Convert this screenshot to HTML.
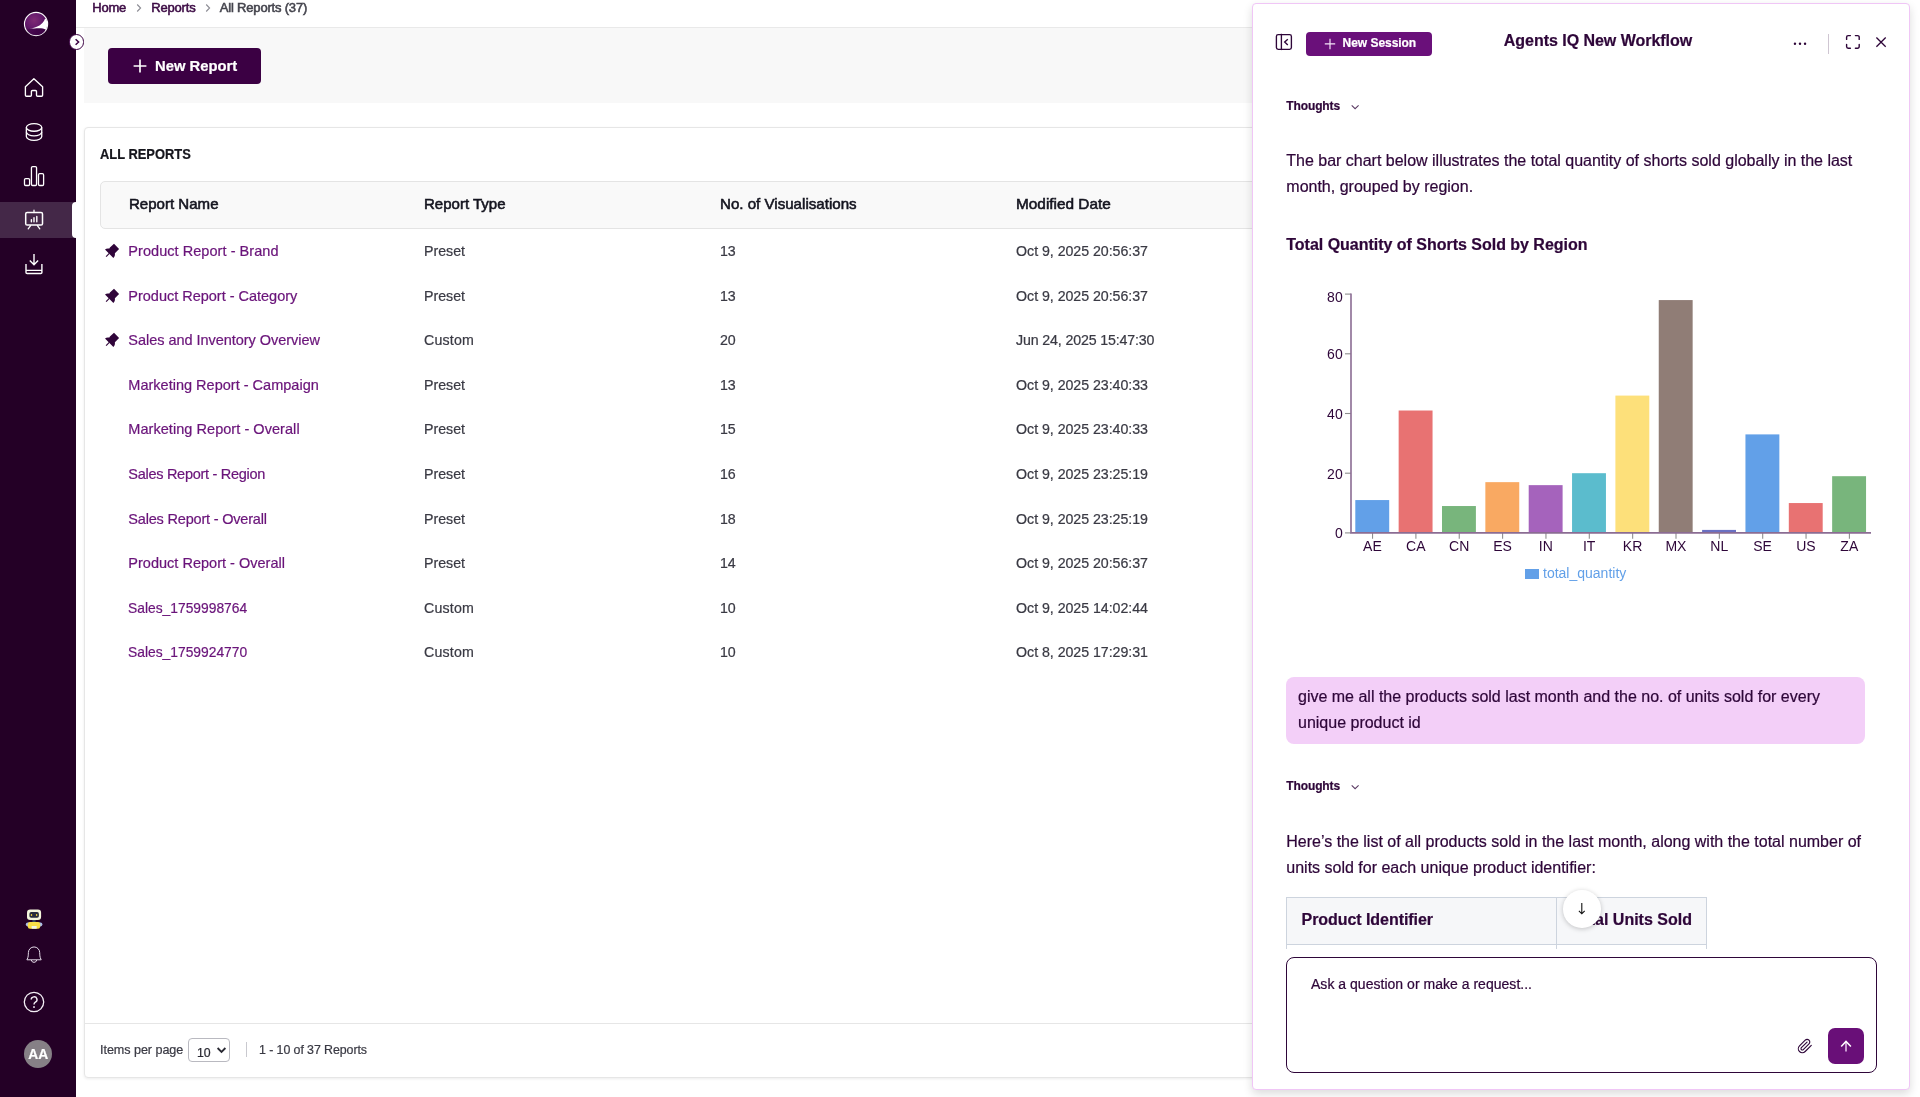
<!DOCTYPE html>
<html lang="en">
<head>
<meta charset="utf-8">
<title>All Reports</title>
<style>
*{box-sizing:border-box;margin:0;padding:0}
html,body{width:1920px;height:1097px;overflow:hidden;background:#fff}
body{position:relative;font-family:"Liberation Sans",sans-serif;color:#2a2a33}
#wrap{position:absolute;left:0;top:0;width:1920px;height:1097px;overflow:hidden;will-change:transform}
main,nav,aside{display:contents}
.abs{position:absolute}
.t{position:absolute;white-space:nowrap;line-height:1;-webkit-text-stroke:.22px}
/* sidebar */
#side{position:absolute;left:0;top:0;width:76px;height:1097px;background:#240026}
#active{position:absolute;left:0;top:202px;width:76px;height:36px;background:#442848}
#notch{position:absolute;left:72px;top:202px;width:4px;height:36px;background:#fff;border-radius:4px 0 0 4px}
/* left main */
#crumb{position:absolute;left:76px;top:0;width:1844px;height:27px;background:#fff}
#crumbline{position:absolute;left:76px;top:27px;width:1824px;height:1px;background:#e9e9e9}
#toolbar{position:absolute;left:84px;top:28px;width:1816px;height:75px;background:#f8f8f8}
#newbtn{position:absolute;left:108px;top:48px;width:153px;height:36px;background:#3b0043;border-radius:4px}
#card{position:absolute;left:84px;top:127px;width:1816px;height:951px;background:#fff;border:1px solid #e6e6e6;border-radius:4px;box-shadow:0 1px 3px rgba(0,0,0,.08)}
#thead{position:absolute;left:100px;top:181px;width:1700px;height:48px;background:#f9f9f9;border:1px solid #e4e4e4;border-radius:5px}
#footline{position:absolute;left:85px;top:1023px;width:1810px;height:1px;background:#e6e6e6}
/* panel */
#panel{position:absolute;left:1252px;top:3px;width:658px;height:1087px;background:#fff;border:1px solid #f0c6f6;border-radius:4px;box-shadow:0 4px 10px rgba(0,0,0,.14)}
.ch text{stroke:#2e0639;stroke-width:.25px}
</style>
</head>
<body>
<div id="wrap">
<main>
<div id="crumb"></div>
<div id="crumbline"></div>
<div id="toolbar"></div>
<div id="newbtn"></div>
<div id="card"></div>
<div id="thead"></div>
<div id="footline"></div>
<span class="t " style="left:92.3px;top:1.00px;font-size:13px;-webkit-text-stroke:0.55px;color:#3d0c45;letter-spacing:-0.229px;">Home</span>
<span class="t " style="left:151.3px;top:1.00px;font-size:13px;-webkit-text-stroke:0.55px;color:#3d0c45;letter-spacing:-0.189px;">Reports</span>
<span class="t " style="left:219.8px;top:1.00px;font-size:13px;-webkit-text-stroke:0.55px;color:#44444d;letter-spacing:-0.188px;">All Reports (37)</span>
<svg class="abs" style="left:135.8px;top:3px" width="6" height="10" viewBox="0 0 6 10"><path d="M1.2 1.5 L4.6 5 L1.2 8.5" fill="none" stroke="#8c8c94" stroke-width="1.1"/></svg>
<svg class="abs" style="left:204.9px;top:3px" width="6" height="10" viewBox="0 0 6 10"><path d="M1.2 1.5 L4.6 5 L1.2 8.5" fill="none" stroke="#8c8c94" stroke-width="1.1"/></svg>
<svg class="abs" style="left:133px;top:59px" width="14" height="14" viewBox="0 0 14 14"><path d="M7 0.6V13.4M0.6 7H13.4" stroke="#fff" stroke-width="1.65" fill="none"/></svg>
<span class="t " style="left:154.8px;top:59.00px;font-size:14px;font-weight:700;color:#fff;transform:scaleX(1.0566);transform-origin:0 50%;">New Report</span>
<span class="t " style="left:100.0px;top:147.00px;font-size:14px;font-weight:700;color:#15151c;transform:scaleX(0.9215);transform-origin:0 50%;">ALL REPORTS</span>
<span class="t " style="left:129.4px;top:196.80px;font-size:14.4px;-webkit-text-stroke:0.55px;color:#14141f;transform:scaleX(1.0458);transform-origin:0 50%;">Report Name</span>
<span class="t " style="left:424.0px;top:196.80px;font-size:14.4px;-webkit-text-stroke:0.55px;color:#14141f;transform:scaleX(1.0430);transform-origin:0 50%;">Report Type</span>
<span class="t " style="left:720.1px;top:196.80px;font-size:14.4px;-webkit-text-stroke:0.55px;color:#14141f;transform:scaleX(1.0498);transform-origin:0 50%;">No. of Visualisations</span>
<span class="t " style="left:1016.1px;top:196.80px;font-size:14.4px;-webkit-text-stroke:0.55px;color:#14141f;transform:scaleX(1.0676);transform-origin:0 50%;">Modified Date</span>
<span class="t " style="left:128.3px;top:243.75px;font-size:14.5px;color:#6a147a;letter-spacing:0.052px;">Product Report - Brand</span>
<span class="t " style="left:424.0px;top:243.90px;font-size:14.2px;color:#3a3a44;letter-spacing:-0.003px;">Preset</span>
<span class="t " style="left:720.1px;top:243.90px;font-size:14.2px;color:#3a3a44;letter-spacing:-0.281px;">13</span>
<span class="t " style="left:1016.1px;top:243.90px;font-size:14.2px;color:#3a3a44;letter-spacing:-0.033px;">Oct 9, 2025 20:56:37</span>
<svg class="abs" style="left:104px;top:243px" width="16" height="16" viewBox="0 0 16 16"><path d="M10 0.8 L15.1 6 L10.9 10.2 Q11.1 12.4 10.6 13.3 L9.4 15 L1 6.6 Q2.8 4.9 5.4 5.6 L5.9 4.6 Z" fill="#30053a"/><path d="M5.3 10.3 L2.1 13.7" stroke="#30053a" stroke-width="1.1" fill="none"/></svg>
<span class="t " style="left:128.3px;top:288.75px;font-size:14.5px;color:#6a147a;letter-spacing:-0.010px;">Product Report - Category</span>
<span class="t " style="left:424.0px;top:288.90px;font-size:14.2px;color:#3a3a44;letter-spacing:-0.003px;">Preset</span>
<span class="t " style="left:720.1px;top:288.90px;font-size:14.2px;color:#3a3a44;letter-spacing:-0.281px;">13</span>
<span class="t " style="left:1016.1px;top:288.90px;font-size:14.2px;color:#3a3a44;letter-spacing:-0.033px;">Oct 9, 2025 20:56:37</span>
<svg class="abs" style="left:104px;top:288px" width="16" height="16" viewBox="0 0 16 16"><path d="M10 0.8 L15.1 6 L10.9 10.2 Q11.1 12.4 10.6 13.3 L9.4 15 L1 6.6 Q2.8 4.9 5.4 5.6 L5.9 4.6 Z" fill="#30053a"/><path d="M5.3 10.3 L2.1 13.7" stroke="#30053a" stroke-width="1.1" fill="none"/></svg>
<span class="t " style="left:128.3px;top:332.75px;font-size:14.5px;color:#6a147a;letter-spacing:-0.034px;">Sales and Inventory Overview</span>
<span class="t " style="left:424.0px;top:332.90px;font-size:14.2px;color:#3a3a44;letter-spacing:0.182px;">Custom</span>
<span class="t " style="left:720.1px;top:332.90px;font-size:14.2px;color:#3a3a44;letter-spacing:-0.281px;">20</span>
<span class="t " style="left:1016.1px;top:332.90px;font-size:14.2px;color:#3a3a44;letter-spacing:-0.146px;">Jun 24, 2025 15:47:30</span>
<svg class="abs" style="left:104px;top:332px" width="16" height="16" viewBox="0 0 16 16"><path d="M10 0.8 L15.1 6 L10.9 10.2 Q11.1 12.4 10.6 13.3 L9.4 15 L1 6.6 Q2.8 4.9 5.4 5.6 L5.9 4.6 Z" fill="#30053a"/><path d="M5.3 10.3 L2.1 13.7" stroke="#30053a" stroke-width="1.1" fill="none"/></svg>
<span class="t " style="left:128.3px;top:377.75px;font-size:14.5px;color:#6a147a;letter-spacing:0.011px;">Marketing Report - Campaign</span>
<span class="t " style="left:424.0px;top:377.90px;font-size:14.2px;color:#3a3a44;letter-spacing:-0.003px;">Preset</span>
<span class="t " style="left:720.1px;top:377.90px;font-size:14.2px;color:#3a3a44;letter-spacing:-0.281px;">13</span>
<span class="t " style="left:1016.1px;top:377.90px;font-size:14.2px;color:#3a3a44;letter-spacing:-0.033px;">Oct 9, 2025 23:40:33</span>
<span class="t " style="left:128.3px;top:421.75px;font-size:14.5px;color:#6a147a;letter-spacing:0.051px;">Marketing Report - Overall</span>
<span class="t " style="left:424.0px;top:421.90px;font-size:14.2px;color:#3a3a44;letter-spacing:-0.003px;">Preset</span>
<span class="t " style="left:720.1px;top:421.90px;font-size:14.2px;color:#3a3a44;letter-spacing:-0.281px;">15</span>
<span class="t " style="left:1016.1px;top:421.90px;font-size:14.2px;color:#3a3a44;letter-spacing:-0.033px;">Oct 9, 2025 23:40:33</span>
<span class="t " style="left:128.3px;top:466.75px;font-size:14.5px;color:#6a147a;letter-spacing:-0.279px;">Sales Report - Region</span>
<span class="t " style="left:424.0px;top:466.90px;font-size:14.2px;color:#3a3a44;letter-spacing:-0.003px;">Preset</span>
<span class="t " style="left:720.1px;top:466.90px;font-size:14.2px;color:#3a3a44;letter-spacing:-0.281px;">16</span>
<span class="t " style="left:1016.1px;top:466.90px;font-size:14.2px;color:#3a3a44;letter-spacing:-0.033px;">Oct 9, 2025 23:25:19</span>
<span class="t " style="left:128.3px;top:511.75px;font-size:14.5px;color:#6a147a;letter-spacing:-0.188px;">Sales Report - Overall</span>
<span class="t " style="left:424.0px;top:511.90px;font-size:14.2px;color:#3a3a44;letter-spacing:-0.003px;">Preset</span>
<span class="t " style="left:720.1px;top:511.90px;font-size:14.2px;color:#3a3a44;letter-spacing:-0.281px;">18</span>
<span class="t " style="left:1016.1px;top:511.90px;font-size:14.2px;color:#3a3a44;letter-spacing:-0.033px;">Oct 9, 2025 23:25:19</span>
<span class="t " style="left:128.3px;top:555.75px;font-size:14.5px;color:#6a147a;letter-spacing:0.015px;">Product Report - Overall</span>
<span class="t " style="left:424.0px;top:555.90px;font-size:14.2px;color:#3a3a44;letter-spacing:-0.003px;">Preset</span>
<span class="t " style="left:720.1px;top:555.90px;font-size:14.2px;color:#3a3a44;letter-spacing:-0.281px;">14</span>
<span class="t " style="left:1016.1px;top:555.90px;font-size:14.2px;color:#3a3a44;letter-spacing:-0.033px;">Oct 9, 2025 20:56:37</span>
<span class="t " style="left:128.3px;top:600.75px;font-size:14.5px;color:#6a147a;transform:scaleX(0.9537);transform-origin:0 50%;">Sales_1759998764</span>
<span class="t " style="left:424.0px;top:600.90px;font-size:14.2px;color:#3a3a44;letter-spacing:0.182px;">Custom</span>
<span class="t " style="left:720.1px;top:600.90px;font-size:14.2px;color:#3a3a44;letter-spacing:-0.281px;">10</span>
<span class="t " style="left:1016.1px;top:600.90px;font-size:14.2px;color:#3a3a44;letter-spacing:-0.033px;">Oct 9, 2025 14:02:44</span>
<span class="t " style="left:128.3px;top:644.75px;font-size:14.5px;color:#6a147a;transform:scaleX(0.9537);transform-origin:0 50%;">Sales_1759924770</span>
<span class="t " style="left:424.0px;top:644.90px;font-size:14.2px;color:#3a3a44;letter-spacing:0.182px;">Custom</span>
<span class="t " style="left:720.1px;top:644.90px;font-size:14.2px;color:#3a3a44;letter-spacing:-0.281px;">10</span>
<span class="t " style="left:1016.1px;top:644.90px;font-size:14.2px;color:#3a3a44;letter-spacing:-0.033px;">Oct 8, 2025 17:29:31</span>
<span class="t " style="left:100.0px;top:1043.70px;font-size:12.6px;color:#3a3a44;letter-spacing:-0.055px;">Items per page</span>
<div class="abs" style="left:188px;top:1038px;width:42px;height:24px;border:1px solid #b9b9c0;border-radius:4px;background:#fff"></div>
<span class="t " style="left:197.0px;top:1046.85px;font-size:12.3px;color:#2a2a33;">10</span>
<svg class="abs" style="left:215.6px;top:1046px" width="11" height="9" viewBox="0 0 11 9"><path d="M1.6 2 L5.5 6 L9.4 2" fill="none" stroke="#2a2a33" stroke-width="1.8"/></svg>
<div class="abs" style="left:246px;top:1042px;width:1px;height:15px;background:#c9c9cf"></div>
<span class="t " style="left:259.0px;top:1043.80px;font-size:12.4px;color:#3a3a44;letter-spacing:-0.080px;">1 - 10 of 37 Reports</span>
</main>
<nav>
<div id="side"></div>
<div id="active"></div>
<div id="notch"></div>
<svg class="abs" style="left:23px;top:11px" width="26" height="26" viewBox="0 0 26 26">
<defs><radialGradient id="lg" cx="42%" cy="34%" r="62%"><stop offset="0" stop-color="#7e2b74"/><stop offset="0.55" stop-color="#651a6c"/><stop offset="1" stop-color="#470d50"/></radialGradient>
<linearGradient id="ld" x1="0" y1="0" x2="1" y2="0"><stop offset="0" stop-color="#3e0346" stop-opacity="0.25"/><stop offset="0.6" stop-color="#3e0346" stop-opacity="0.95"/></linearGradient>
<clipPath id="lc"><circle cx="13" cy="13" r="11.3"/></clipPath></defs>
<circle cx="13.05" cy="13" r="11.6" fill="url(#lg)" stroke="#fff" stroke-width="1.1"/>
<g clip-path="url(#lc)">
<path d="M6.2 17.8 C13 17.2 19.5 16.4 22.4 18.4 L22 26 L2 26 L2 19 Z" fill="url(#ld)"/>
<path d="M6.2 17.75 C14.5 16.4 20 13.6 22 7.8 L26 8 L26 19 L22.6 18.5 C20 16.6 13.5 17.2 6.2 17.75 Z" fill="#fff"/>
</g></svg>
<svg class="abs" style="left:22px;top:75px" width="24" height="24" viewBox="22 75 24 24" ><path d="M25.4 86.7 L33.9 78.7 L42.6 86.7 V95.2 a1.1 1.1 0 0 1 -1.1 1.1 H37.6 a1.1 1.1 0 0 1 -1.1 -1.1 V91.6 a1.1 1.1 0 0 0 -1.1 -1.1 H32.5 a1.1 1.1 0 0 0 -1.1 1.1 V95.2 a1.1 1.1 0 0 1 -1.1 1.1 H26.5 a1.1 1.1 0 0 1 -1.1 -1.1 Z" fill="none" stroke="#fff" stroke-width="1.35" stroke-linejoin="round"/></svg>
<svg class="abs" style="left:22px;top:120px" width="24" height="24" viewBox="22 120 24 24" ><g fill="none" stroke="#fff" stroke-width="1.3"><ellipse cx="34.05" cy="127.45" rx="7.7" ry="3.8"/><path d="M26.35 127.45 V136.6 A7.7 3.8 0 0 0 41.75 136.6 V127.45"/><path d="M26.35 132.1 A7.7 3.8 0 0 0 41.75 132.1"/></g></svg>
<svg class="abs" style="left:22px;top:164px" width="24" height="24" viewBox="22 164 24 24" ><g fill="none" stroke="#fff" stroke-width="1.3"><rect x="24.5" y="178.6" width="5.1" height="6.9" rx="1.2"/><rect x="31.45" y="166.6" width="5.1" height="18.9" rx="1.2"/><rect x="38.5" y="173.7" width="5.1" height="11.8" rx="1.2"/></g></svg>
<svg class="abs" style="left:22px;top:208px" width="24" height="24" viewBox="22 208 24 24" ><g fill="none" stroke="#fff" stroke-width="1.5" stroke-linecap="round"><rect x="25.7" y="212.6" width="16.8" height="12.5" rx="1.4"/><path d="M34 210.2V212.6M30.6 225.6L28.2 228.8M37.4 225.6L39.8 228.8" stroke-width="1.3"/><path d="M31.4 219.6V221.8M34 217.8V221.8M36.8 216.4V221.8" stroke-width="1.4"/></g></svg>
<svg class="abs" style="left:22px;top:252px" width="24" height="24" viewBox="22 252 24 24" ><g fill="none" stroke="#fff" stroke-width="1.4"><path d="M34 254V264.6M29.8 260.4L34 264.7L38.1 260.4"/><path d="M26 264V272.4a1.1 1.1 0 0 0 1.1 1.1H40.8a1.1 1.1 0 0 0 1.1 -1.1V264M26 270.4H41.9"/></g></svg>
<svg class="abs" style="left:24px;top:907px" width="20" height="24" viewBox="24 907 20 24" ><rect x="32.4" y="919.6" width="3.2" height="2.8" fill="#3b4a5c"/>
<rect x="25.8" y="922.6" width="16.6" height="3.8" rx="1.8" fill="#a9bce6"/>
<rect x="27.8" y="922" width="12.4" height="6.8" rx="2.2" fill="#fbdf47"/>
<rect x="31.6" y="925.9" width="5.1" height="2.9" rx="0.5" fill="#f5f6e2"/>
<rect x="27" y="909.6" width="14.1" height="10.4" rx="3.2" fill="#f4f6dc"/>
<rect x="29.4" y="912.1" width="9.5" height="5.6" rx="1.8" fill="#262b3b"/>
<ellipse cx="31.5" cy="915" rx="0.75" ry="1.05" fill="#f3d43c"/><ellipse cx="36.6" cy="915" rx="0.75" ry="1.05" fill="#f3d43c"/></svg>
<svg class="abs" style="left:24px;top:944px" width="20" height="22" viewBox="24 944 20 22" ><g fill="none" stroke="#e6dcea" stroke-width="1"><path d="M26.9 959.8 C28.6 957 28.2 954.5 28.4 952.6 A5.65 5.65 0 0 1 39.7 952.6 C39.9 954.5 39.5 957 41.2 959.8 Z" stroke-linejoin="round"/><path d="M31.2 960 A2.9 3.2 0 0 0 36.8 960"/></g></svg>
<svg class="abs" style="left:22px;top:990px" width="24" height="24" viewBox="22 990 24 24" ><g fill="none" stroke="#f3eef5" stroke-width="1.3"><circle cx="34" cy="1002" r="9.7"/><path d="M31.2 999.6 A2.9 2.8 0 1 1 35.4 1002.1 C34.4 1002.7 34 1003.2 34 1004.4" stroke-width="1.4"/></g><rect x="33.2" y="1006.2" width="1.6" height="1.7" fill="#f3eef5"/></svg>
<div class="abs" style="left:24px;top:1040px;width:28px;height:28px;border-radius:50%;background:#868086"></div>
<span class="t " style="left:28.3px;top:1047.60px;font-size:13.8px;font-weight:700;color:#fff;letter-spacing:-0.037px;">AA</span>
<div class="abs" style="left:68.6px;top:34.3px;width:15.6px;height:15.6px;border-radius:50%;background:#fff;border:1.4px solid #3b0043"></div>
<svg class="abs" style="left:72px;top:37px" width="10" height="10" viewBox="0 0 10 10"><path d="M3.6 2.2 L6.6 5 L3.6 7.8" fill="none" stroke="#3b0043" stroke-width="1.5"/></svg>
</nav>
<aside>
<div id="panel"></div>
<svg class="abs" style="left:1274px;top:32px" width="20" height="20" viewBox="1274 32 20 20"><g fill="none" stroke="#2e0639" stroke-width="1.35"><rect x="1276.4" y="34.6" width="15" height="14.7" rx="1.8"/><path d="M1281.4 33.8V50.1"/><path d="M1287.8 39.3L1284.7 42.1L1287.8 44.9" stroke-width="1.4"/></g></svg>
<div class="abs" style="left:1306px;top:32px;width:126px;height:24px;border-radius:4px;background:#6a107a"></div>
<svg class="abs" style="left:1324px;top:38px" width="12" height="12" viewBox="0 0 12 12"><path d="M6 0.8V11.2M0.8 5.8H11.2" stroke="#f4e2f7" stroke-width="1.2" fill="none"/></svg>
<span class="t " style="left:1342.6px;top:37.00px;font-size:12px;font-weight:700;color:#fff;letter-spacing:-0.043px;">New Session</span>
<span class="t " style="left:1503.8px;top:32.50px;font-size:16px;font-weight:700;color:#2e0639;letter-spacing:-0.032px;">Agents IQ New Workflow</span>
<svg class="abs" style="left:1792px;top:41px" width="16" height="6" viewBox="0 0 16 6"><circle cx="2.95" cy="2.8" r="1.2" fill="#2e0639"/><circle cx="8" cy="2.8" r="1.2" fill="#2e0639"/><circle cx="13.05" cy="2.8" r="1.2" fill="#2e0639"/></svg>
<div class="abs" style="left:1828px;top:34px;width:1px;height:20px;background:#cfc6d2"></div>
<svg class="abs" style="left:1844px;top:33px" width="18" height="18" viewBox="1844 33 18 18"><g fill="none" stroke="#2e0639" stroke-width="1.4" stroke-linecap="round"><path d="M1846.6 39.4V37.2a1.6 1.6 0 0 1 1.6 -1.6H1850.4"/><path d="M1855.4 35.6H1857.6a1.6 1.6 0 0 1 1.6 1.6V39.4"/><path d="M1859.2 44.4V46.6a1.6 1.6 0 0 1 -1.6 1.6H1855.4"/><path d="M1850.4 48.2H1848.2a1.6 1.6 0 0 1 -1.6 -1.6V44.4"/></g></svg>
<svg class="abs" style="left:1874px;top:35px" width="14" height="14" viewBox="1874 35 14 14"><path d="M1876.4 37.5L1885.7 46.7M1885.7 37.5L1876.4 46.7" fill="none" stroke="#2e0639" stroke-width="1.3"/></svg>
<span class="t " style="left:1286.3px;top:100.00px;font-size:12px;font-weight:700;color:#2e0639;letter-spacing:-0.122px;">Thoughts</span>
<svg class="abs" style="left:1350px;top:102.8px" width="10" height="8" viewBox="0 0 10 8"><path d="M1.7 2.4L5.1 5.7L8.6 2.4" fill="none" stroke="#5a3a63" stroke-width="1.05"/></svg>
<span class="t " style="left:1286.3px;top:152.50px;font-size:16px;color:#2e0639;letter-spacing:-0.006px;">The bar chart below illustrates the total quantity of shorts sold globally in the last</span>
<span class="t " style="left:1286.3px;top:178.50px;font-size:16px;color:#2e0639;">month, grouped by region.</span>
<span class="t " style="left:1286.3px;top:236.50px;font-size:16px;font-weight:700;color:#2e0639;letter-spacing:-0.019px;">Total Quantity of Shorts Sold by Region</span>
<svg class="abs" style="left:1286px;top:280px" width="600" height="320" viewBox="1286 280 600 320" font-family="'Liberation Sans',sans-serif" font-size="14" fill="#2e0639" stroke="#2e0639" stroke-width="0" class="ch"><rect x="1355.30" y="500.06" width="33.9" height="32.84" fill="#62a0e8"/><path d="M1372.55 532.9V538.6999999999999" stroke="#8e8e8e" stroke-width="1.1"/><text x="1372.45" y="551" text-anchor="middle">AE</text><rect x="1398.65" y="410.51" width="33.9" height="122.38" fill="#e87272"/><path d="M1415.90 532.9V538.6999999999999" stroke="#8e8e8e" stroke-width="1.1"/><text x="1415.80" y="551" text-anchor="middle">CA</text><rect x="1442.00" y="506.03" width="33.9" height="26.86" fill="#78b57c"/><path d="M1459.25 532.9V538.6999999999999" stroke="#8e8e8e" stroke-width="1.1"/><text x="1459.15" y="551" text-anchor="middle">CN</text><rect x="1485.35" y="482.15" width="33.9" height="50.74" fill="#f9a962"/><path d="M1502.60 532.9V538.6999999999999" stroke="#8e8e8e" stroke-width="1.1"/><text x="1502.50" y="551" text-anchor="middle">ES</text><rect x="1528.70" y="485.14" width="33.9" height="47.76" fill="#a563bc"/><path d="M1545.95 532.9V538.6999999999999" stroke="#8e8e8e" stroke-width="1.1"/><text x="1545.85" y="551" text-anchor="middle">IN</text><rect x="1572.05" y="473.20" width="33.9" height="59.70" fill="#5bbccd"/><path d="M1589.30 532.9V538.6999999999999" stroke="#8e8e8e" stroke-width="1.1"/><text x="1589.20" y="551" text-anchor="middle">IT</text><rect x="1615.40" y="395.59" width="33.9" height="137.31" fill="#fde07a"/><path d="M1632.65 532.9V538.6999999999999" stroke="#8e8e8e" stroke-width="1.1"/><text x="1632.55" y="551" text-anchor="middle">KR</text><rect x="1658.75" y="300.07" width="33.9" height="232.83" fill="#907d76"/><path d="M1676.00 532.9V538.6999999999999" stroke="#8e8e8e" stroke-width="1.1"/><text x="1675.90" y="551" text-anchor="middle">MX</text><rect x="1702.10" y="529.91" width="33.9" height="2.98" fill="#6a70c2"/><path d="M1719.35 532.9V538.6999999999999" stroke="#8e8e8e" stroke-width="1.1"/><text x="1719.25" y="551" text-anchor="middle">NL</text><rect x="1745.45" y="434.39" width="33.9" height="98.50" fill="#62a0e8"/><path d="M1762.70 532.9V538.6999999999999" stroke="#8e8e8e" stroke-width="1.1"/><text x="1762.60" y="551" text-anchor="middle">SE</text><rect x="1788.80" y="503.05" width="33.9" height="29.85" fill="#e87272"/><path d="M1806.05 532.9V538.6999999999999" stroke="#8e8e8e" stroke-width="1.1"/><text x="1805.95" y="551" text-anchor="middle">US</text><rect x="1832.15" y="476.19" width="33.9" height="56.71" fill="#78b57c"/><path d="M1849.40 532.9V538.6999999999999" stroke="#8e8e8e" stroke-width="1.1"/><text x="1849.30" y="551" text-anchor="middle">ZA</text><path d="M1345.0 532.90H1351.0" stroke="#8e8e8e" stroke-width="1.1"/><text x="1342.7" y="538.2" text-anchor="end">0</text><path d="M1345.0 473.20H1351.0" stroke="#8e8e8e" stroke-width="1.1"/><text x="1342.7" y="478.5" text-anchor="end">20</text><path d="M1345.0 413.50H1351.0" stroke="#8e8e8e" stroke-width="1.1"/><text x="1342.7" y="418.8" text-anchor="end">40</text><path d="M1345.0 353.80H1351.0" stroke="#8e8e8e" stroke-width="1.1"/><text x="1342.7" y="359.1" text-anchor="end">60</text><path d="M1345.0 294.10H1351.0" stroke="#8e8e8e" stroke-width="1.1"/><text x="1342.7" y="302.1" text-anchor="end">80</text><path d="M1351.0 293.60V532.9H1871" fill="none" stroke="#8b6c93" stroke-width="1.6"/><rect x="1525" y="569" width="14" height="10" fill="#62a0e8"/><text x="1543" y="578.3" fill="#62a0e8" style="stroke:#62a0e8">total_quantity</text></svg>
<div class="abs" style="left:1286px;top:677px;width:579px;height:67px;border-radius:8px;background:#f3cff8"></div>
<span class="t " style="left:1298.0px;top:688.50px;font-size:16px;color:#2e0639;letter-spacing:-0.001px;">give me all the products sold last month and the no. of units sold for every</span>
<span class="t " style="left:1298.0px;top:714.50px;font-size:16px;color:#2e0639;">unique product id</span>
<span class="t " style="left:1286.3px;top:780.00px;font-size:12px;font-weight:700;color:#2e0639;letter-spacing:-0.122px;">Thoughts</span>
<svg class="abs" style="left:1350px;top:782.8px" width="10" height="8" viewBox="0 0 10 8"><path d="M1.7 2.4L5.1 5.7L8.6 2.4" fill="none" stroke="#5a3a63" stroke-width="1.05"/></svg>
<span class="t " style="left:1286.3px;top:833.50px;font-size:16px;color:#2e0639;letter-spacing:-0.005px;">Here’s the list of all products sold in the last month, along with the total number of</span>
<span class="t " style="left:1286.3px;top:859.50px;font-size:16px;color:#2e0639;">units sold for each unique product identifier:</span>
<div class="abs" style="left:1286px;top:897px;width:421px;height:51.6px;overflow:hidden"><div style="position:absolute;left:0;top:0;width:421px;height:48px;background:#f6f7f9;border:1px solid #cdd4de"></div><div style="position:absolute;left:270px;top:0;width:1px;height:60px;background:#cdd4de"></div><div style="position:absolute;left:0;top:47px;width:1px;height:10px;background:#cdd4de"></div><div style="position:absolute;left:420px;top:47px;width:1px;height:10px;background:#cdd4de"></div></div>
<span class="t " style="left:1301.6px;top:911.50px;font-size:16px;font-weight:700;color:#2e0639;letter-spacing:-0.062px;">Product Identifier</span>
<span class="t " style="left:1571.3px;top:911.50px;font-size:16px;font-weight:700;color:#2e0639;letter-spacing:0.007px;">Total Units Sold</span>
<div class="abs" style="left:1563px;top:890px;width:37.6px;height:37.6px;border-radius:50%;background:#fff;box-shadow:0 1px 5px rgba(0,0,0,.22)"></div>
<svg class="abs" style="left:1576px;top:902px" width="12" height="14" viewBox="0 0 12 14"><path d="M5.8 1V11.6M2.9 8.8L5.8 11.8L8.7 8.8" fill="none" stroke="#111" stroke-width="1.1"/></svg>
<div class="abs" style="left:1286px;top:957px;width:591px;height:116px;border:1px solid #2e0639;border-radius:8px;background:#fff"></div>
<span class="t " style="left:1311.0px;top:977.00px;font-size:14px;color:#2e0639;letter-spacing:0.023px;">Ask a question or make a request...</span>
<svg class="abs" style="left:1796.8px;top:1038.1px" width="16" height="16" viewBox="0 0 24 24"><path d="m21.44 11.05-9.19 9.19a6 6 0 0 1-8.49-8.49l8.57-8.57A4 4 0 1 1 18 8.84l-8.59 8.57a2 2 0 0 1-2.83-2.83l8.49-8.48" fill="none" stroke="#2e0639" stroke-width="1.7" stroke-linecap="round"/></svg>
<div class="abs" style="left:1828px;top:1028px;width:36px;height:36px;border-radius:7px;background:#690f78"></div>
<svg class="abs" style="left:1838px;top:1038px" width="16" height="16" viewBox="1838 1038 16 16"><path d="M1846 1051.4V1041.4" stroke="#e9c9ee" stroke-width="1.5" fill="none"/><path d="M1841.2 1046.4L1846 1041.4L1850.9 1046.4" stroke="#fff" stroke-width="1.5" fill="none"/></svg>
</aside>
</div>
</body>
</html>
